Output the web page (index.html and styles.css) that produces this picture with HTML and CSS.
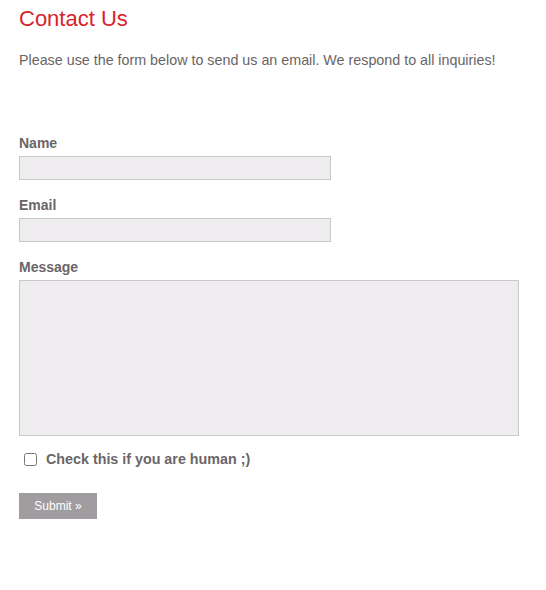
FILE: index.html
```html
<!DOCTYPE html>
<html>
<head>
<meta charset="utf-8">
<link rel="stylesheet" href="styles.css">
</head>
<body>
<div class="page">
  <h1 class="title">Contact Us</h1>
  <p class="intro">Please use the form below to send us an email. We respond to all inquiries!</p>
  <form class="form">
    <label class="label" for="name">Name</label>
    <input class="field" id="name" type="text">
    <label class="label" for="email">Email</label>
    <input class="field" id="email" type="text">
    <label class="label" for="msg">Message</label>
    <textarea class="area" id="msg"></textarea>
    <div class="check">
      <input class="box" type="checkbox" id="human">
      <label class="check-label" for="human">Check this if you are human ;)</label>
    </div>
    <button class="submit" type="button">Submit »</button>
  </form>
</div>
</body>
</html>
```
FILE: styles.css
```css
html, body { margin: 0; padding: 0; background: #fff; }
body { font-family: "Liberation Sans", Arial, sans-serif; color: #696466; }
.page { padding: 6px 19px 0 19px; }
.title { font-size: 22px; font-weight: normal; color: #d7232b; margin: 0; line-height: 26px; }
.intro { font-size: 14.3px; margin: 18px 0 0; line-height: 20px; }
.form { display: flex; flex-direction: column; align-items: flex-start; margin-top: 65px; }
.label { font-size: 14px; font-weight: bold; color: #6a6668; line-height: 16px; margin-bottom: 5px; }
.field { box-sizing: border-box; width: 312px; height: 24px; background: #eeecee; border: 1px solid #c9c9c9; margin: 0 0 17px; padding: 0; }
.area { box-sizing: border-box; width: 500px; height: 156px; background: #eeecee; border: 1px solid #c9c9c9; margin: 0; padding: 0; resize: none; }
.check { display: flex; align-items: center; margin-top: 15px; }
.box { width: 13px; height: 13px; margin: 0 0 0 5px; }
.check-label { font-size: 14.3px; font-weight: bold; color: #6a6668; margin-left: 9px; line-height: 16px; }
.submit { margin-top: 26px; width: 78px; height: 26px; background: #a09ca0; color: #fff; border: 0; font-family: "Liberation Sans", Arial, sans-serif; font-size: 12px; padding: 0; }
```
